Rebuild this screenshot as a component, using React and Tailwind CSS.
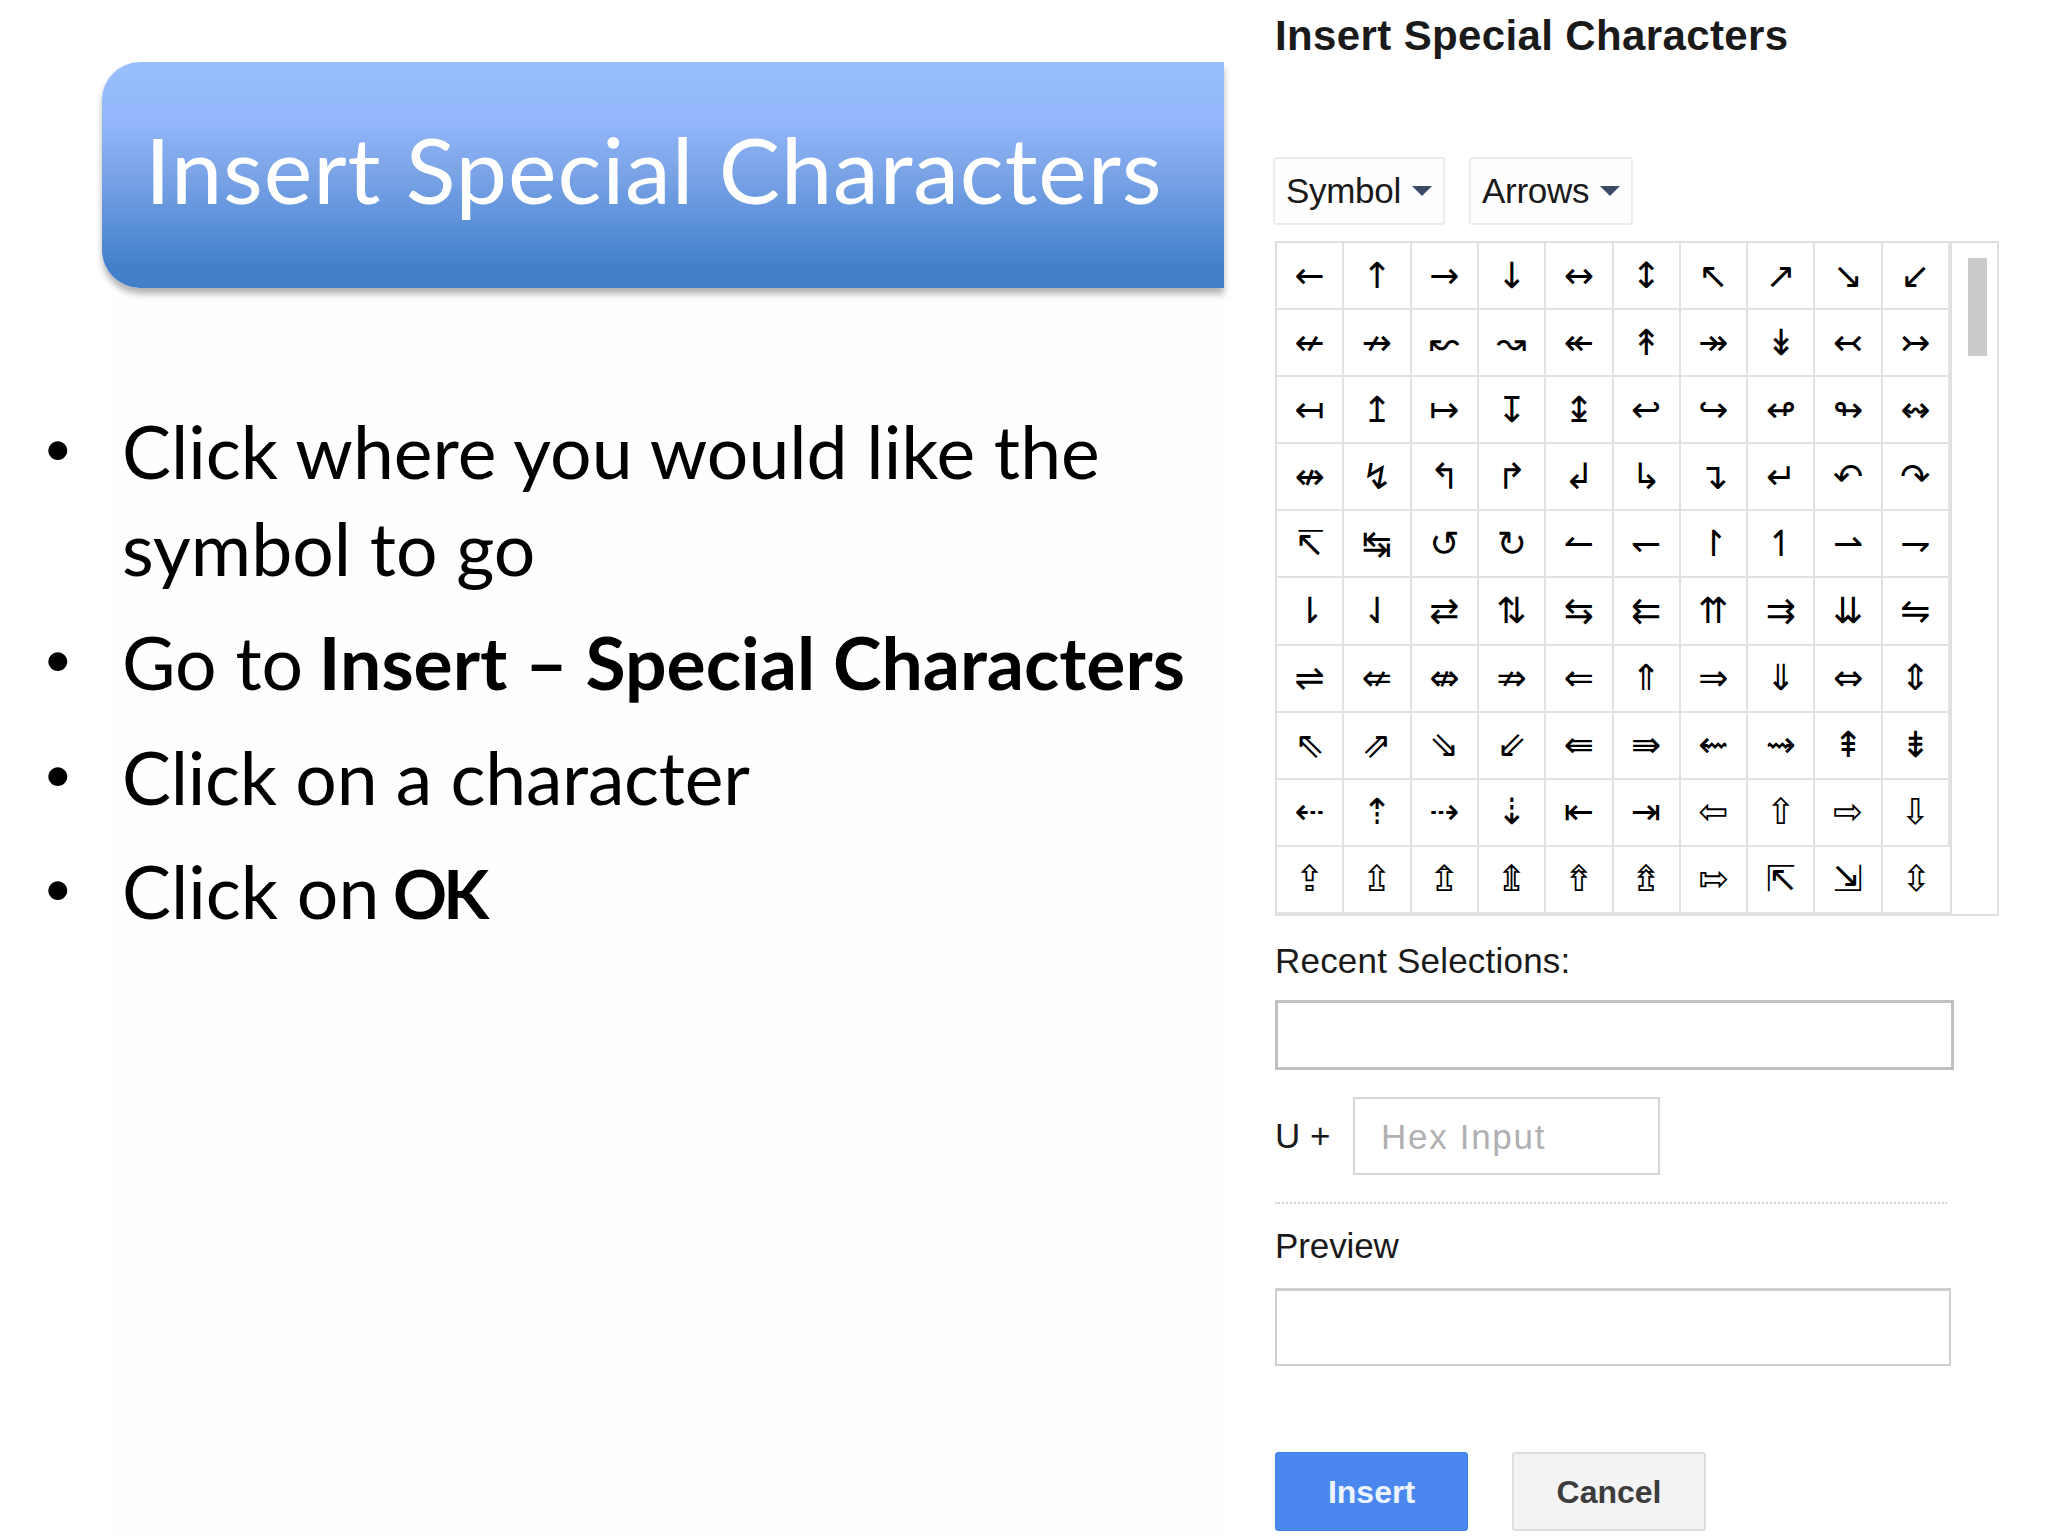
const rows = [
  "←↑→↓↔↕↖↗↘↙",
  "↚↛↜↝↞↟↠↡↢↣",
  "↤↥↦↧↨↩↪↫↬↭",
  "↮↯↰↱↲↳↴↵↶↷",
  "↸↹↺↻↼↽↾↿⇀⇁",
  "⇂⇃⇄⇅⇆⇇⇈⇉⇊⇋",
  "⇌⇍⇎⇏⇐⇑⇒⇓⇔⇕",
  "⇖⇗⇘⇙⇚⇛⇜⇝⇞⇟",
  "⇠⇡⇢⇣⇤⇥⇦⇧⇨⇩",
  "⇪⇫⇬⇭⇮⇯⇰⇱⇲⇳",
];
const symbols = rows.flatMap((r) => Array.from(r));

function Dropdown({ label, width, mr }) {
  return (
    <div className={`${width} ${mr} h-[68px] flex items-center justify-between pl-[11px] pr-[11px] border-2 border-[#ececef] rounded-[3px] bg-[#fefefe] text-[35px] tracking-[-0.3px] text-[#1a1a1a]`}>
      <span>{label}</span>
      <span className="w-0 h-0 border-x-[10px] border-x-transparent border-t-[10px] border-t-[#3d4a66]" />
    </div>
  );
}

function Bullet() {
  return <span className="w-[122px] shrink-0 pl-[43px] text-[51px] leading-[87px]">•</span>;
}

export default function App() {
  return (
    <div className="w-[2048px] h-[1536px] flex overflow-hidden bg-white">
      <div className="w-[1275px] shrink-0 flex flex-col pt-[62px] font-['Lato','Noto_Sans',sans-serif] text-black">
        <div className="relative z-10 ml-[102px] w-[1122px] h-[226px] flex items-center pl-[43px] pb-[12px] rounded-l-[38px] bg-[linear-gradient(180deg,#99bfff_0%,#93b7fa_25%,#7aa3e6_50%,#5b90d9_72%,#4380cc_90%,#417fcb_100%)] shadow-[0_6px_6px_rgba(90,90,90,0.45)]">
          <h1 className="text-[92px] leading-none font-normal text-white tracking-[0.85px] whitespace-nowrap">Insert Special Characters</h1>
        </div>
        <div className="flex-1 pt-[115px] bg-[linear-gradient(90deg,#ffffff_112px,#fefefe_112px,#fefefe_1224px,#ffffff_1224px)]">
          <ul className="flex flex-col gap-[18px] text-[73.3px] leading-[96.5px]">
            <li className="flex">
              <Bullet />
              <span>Click where you would like the<br />symbol to go</span>
            </li>
            <li className="flex whitespace-nowrap">
              <Bullet />
              <span>Go to <b className="font-bold -ml-[3px]">Insert – Special Characters</b></span>
            </li>
            <li className="flex">
              <Bullet />
              <span className="tracking-[-0.25px]">Click on a character</span>
            </li>
            <li className="flex">
              <Bullet />
              <span>Click on <b className="font-bold text-[67px] tracking-[-4px] -ml-[5px]">OK</b></span>
            </li>
          </ul>
        </div>
      </div>

      <div className="flex-1 font-['Liberation_Sans',Arial,sans-serif] text-[#1a1a1a]">
        <h2 className="mt-[12px] h-[48px] text-[42px] leading-[48px] font-bold tracking-[0.37px] whitespace-nowrap">Insert Special Characters</h2>
        <div className="mt-[97px] -ml-[2px] flex">
          <Dropdown label="Symbol" width="w-[172px]" mr="mr-[24px]" />
          <Dropdown label="Arrows" width="w-[164px]" mr="" />
        </div>
        <div className="mt-[16px] w-[724px] h-[675px] flex border-2 border-[#dfdfe2]">
          <div className="w-[675px] grid grid-cols-10 grid-rows-10 border-r-2 border-[#dfdfe2]">
            {symbols.map((s, i) => (
              <div
                key={i}
                className="flex items-center justify-center border-r-2 border-b-2 border-[#e2e2e5] text-[36px] leading-none text-black font-['DejaVu_Sans',sans-serif] last:border-r-0"
              >
                {s}
              </div>
            ))}
          </div>
          <div className="flex-1 pt-[15px] pl-[16px]">
            <div className="w-[19px] h-[98px] bg-[#cbcbce]" />
          </div>
        </div>
        <div className="mt-[22px] h-[46px] text-[35px] leading-[46px] tracking-[0.2px]">Recent Selections:</div>
        <div className="mt-[16px] w-[679px] h-[70px] border-[3px] border-[#c0c0c3] bg-white" />
        <div className="mt-[27px] flex items-center">
          <span className="w-[78px] text-[35px] pt-[1px]">U +</span>
          <div className="w-[307px] h-[78px] flex items-center pl-[26px] pt-[2px] border-2 border-[#d6d6d9] text-[35px] tracking-[1.7px] text-[#b0b0b2]">Hex Input</div>
        </div>
        <div className="mt-[27px] w-[672px] border-t-2 border-dotted border-[#d4d4d6]" />
        <div className="mt-[19px] h-[46px] text-[35px] leading-[46px] tracking-[-0.1px]">Preview</div>
        <div className="mt-[19px] w-[676px] h-[78px] border-2 border-t-[3px] border-[#cfcfd2] bg-white" />
        <div className="mt-[86px] flex gap-[44px]">
          <div className="w-[193px] h-[79px] flex items-center justify-center rounded-[3px] bg-[#4a88ef] text-[32px] font-bold text-[#eef4ff] border border-[#3f7fe6]">Insert</div>
          <div className="w-[194px] h-[79px] flex items-center justify-center rounded-[3px] bg-[#f3f3f4] border-2 border-[#dedee0] text-[32px] font-bold text-[#3c3c3c]">Cancel</div>
        </div>
      </div>
    </div>
  );
}
